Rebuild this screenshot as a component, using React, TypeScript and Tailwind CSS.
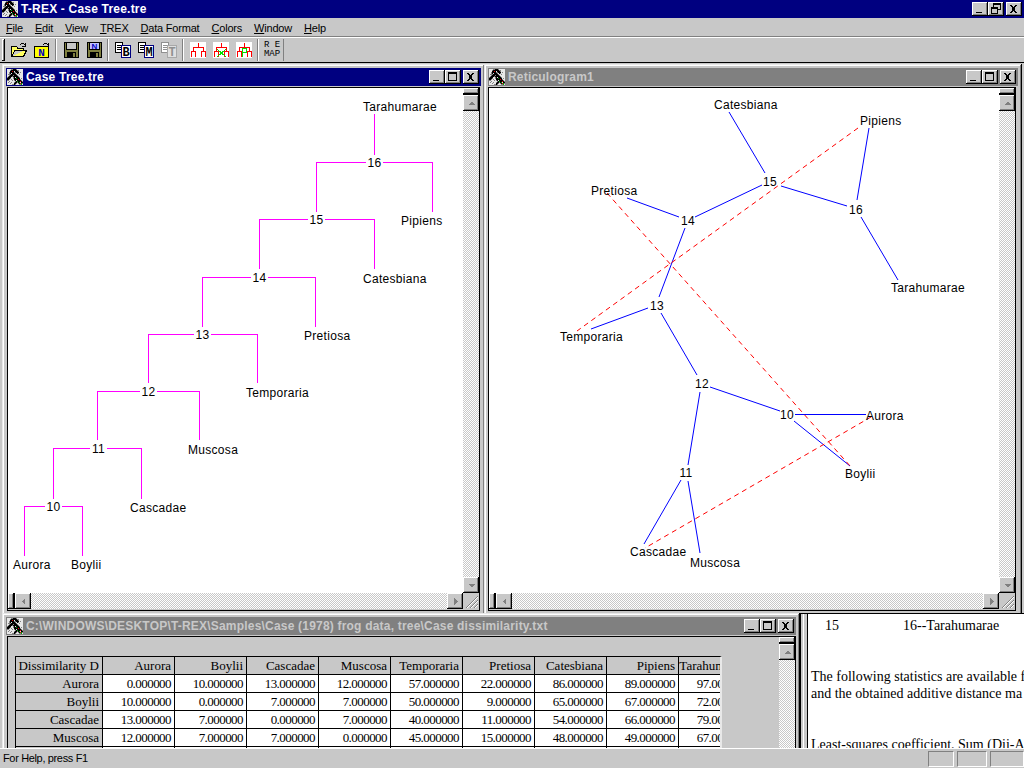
import React from 'react';

const raised = 'shadow-[inset_-1px_-1px_0_#000,inset_1px_1px_0_#fff,inset_-2px_-2px_0_#808080]';
const hatch = 'bg-[repeating-conic-gradient(#c8c8c8_0%_25%,#ffffff_0%_50%)] bg-[length:2px_2px]';

const ICON = [
  'WWWWGGKKKGWWWWWW',
  'WWWGKKKKKKGGWWWW',
  'WWWKKRKWKKKGWWWW',
  'WWGKKKKGGKKKWGWW',
  'WWGKWKKKGWKGWWWW',
  'WGGGKKKKKGWWGWWW',
  'WWGKKKGKKKGWWWWW',
  'WGKKKGKKKKKGWWWW',
  'GKKKWWGKWKKKGWWW',
  'KKKGWWGKKNKKKWGW',
  'KKGWGWWKKKKRKGWW',
  'GGWWWGWGKWKKKKGW',
  'WWGWWWWWGKNKKRKG',
  'WGWWGWWGKKGKNWKK',
  'WWWGWWWKKGWGKRNG',
  'WWWWWGGKGWWWGGNW',
];
const iconColor: Record<string, string> = { W: '#e8e8e8', G: '#808080', K: '#000', R: '#e00000', N: '#00a000' };

const AppIcon = () => (
  <svg width="16" height="16" viewBox="0 0 16 16" shapeRendering="crispEdges" className="shrink-0">
    {ICON.map((row, y) =>
      row.split('').map((c, x) => <rect key={`${x}-${y}`} x={x} y={y} width="1" height="1" fill={iconColor[c]} />)
    )}
  </svg>
);

const Glyph = ({ type }: { type: 'min' | 'max' | 'close' | 'restore' }) => (
  <svg width="16" height="14" viewBox="0 0 16 14" shapeRendering="crispEdges" fill="none" stroke="#000">
    {type === 'min' && <rect x="4" y="9.5" width="6" height="1.5" fill="#000" stroke="none" />}
    {type === 'max' && (
      <>
        <rect x="3.5" y="2.5" width="8" height="8" />
        <path d="M3 3.5h9" />
      </>
    )}
    {type === 'close' && <path d="M4 3l2 0 1.5 2 1.5-2h2l-2.5 4 2.5 4h-2l-1.5-2-1.5 2h-2l2.5-4z" fill="#000" stroke="none" />}
    {type === 'restore' && (
      <>
        <rect x="5.5" y="1.5" width="7" height="6" />
        <path d="M5 2.5h8" />
        <rect x="3.5" y="5.5" width="6" height="6" fill="#c8c8c8" />
        <path d="M3 6.5h7" />
      </>
    )}
  </svg>
);

const CapButton = ({ type }: { type: 'min' | 'max' | 'close' | 'restore' }) => (
  <div className={`w-[16px] h-[14px] bg-[#c8c8c8] ${raised}`}>
    <Glyph type={type} />
  </div>
);

const Arrow = ({ dir }: { dir: 'up' | 'down' | 'left' | 'right' }) => {
  const pts = {
    up: '4,9 11,9 7.5,5.5',
    down: '4,6 11,6 7.5,9.5',
    left: '9,4 9,11 5.5,7.5',
    right: '6,4 6,11 9.5,7.5',
  }[dir];
  return (
    <svg width="15" height="15" viewBox="0 0 15 15" shapeRendering="crispEdges">
      <polygon points={pts} fill="#808080" />
    </svg>
  );
};

const ScrollBtn = ({ dir }: { dir: 'up' | 'down' | 'left' | 'right' }) => (
  <div className={`w-[16px] h-[16px] shrink-0 flex items-center justify-center bg-[#c8c8c8] ${raised}`}>
    <Arrow dir={dir} />
  </div>
);

const VScroll = ({ noDown }: { noDown?: boolean }) => (
  <div className="w-[16px] flex flex-col">
    <div className={`h-[6px] shrink-0 bg-[#c8c8c8] ${raised}`} />
    <div className="h-[1px] shrink-0 bg-black" />
    <ScrollBtn dir="up" />
    <div className={`flex-1 ${hatch}`} />
    {!noDown && <ScrollBtn dir="down" />}
  </div>
);

const HScroll = () => (
  <div className="h-[16px] flex">
    <div className={`w-[6px] shrink-0 bg-[#c8c8c8] ${raised}`} />
    <div className="w-[1px] shrink-0 bg-black" />
    <ScrollBtn dir="left" />
    <div className={`flex-1 ${hatch}`} />
    <ScrollBtn dir="right" />
  </div>
);

const Grip = () => (
  <svg width="16" height="16" viewBox="0 0 16 16" shapeRendering="crispEdges" className="bg-[#c8c8c8]">
    <path d="M15 3L3 15M15 7L7 15M15 11L11 15" stroke="#808080" />
    <path d="M15 4L4 15M15 8L8 15M15 12L12 15" stroke="#fff" />
  </svg>
);

const TitleBar = ({ title, active }: { title: string; active?: boolean }) => (
  <div className={`h-[18px] shrink-0 flex items-center pl-[1px] pr-[2px] ${active ? 'bg-[#000080]' : 'bg-[#808080]'}`}>
    <AppIcon />
    <span className={`ml-[3px] flex-1 truncate font-bold text-[12px] tracking-[0.2px] ${active ? 'text-white' : 'text-[#c8c8c8]'}`}>
      {title}
    </span>
    <CapButton type="min" />
    <CapButton type="max" />
    <div className="w-[2px]" />
    <CapButton type="close" />
  </div>
);

const frame =
  'absolute flex flex-col p-[4px] bg-[#c8c8c8] shadow-[inset_-1px_-1px_0_#000,inset_1px_1px_0_#e8e8e8,inset_-2px_-2px_0_#808080,inset_2px_2px_0_#fff]';

/* ---------- tree ---------- */

type Bracket = { label: string; y: number; l: number; r: number; gl: number; gr: number; end: number };

const BRACKETS: Bracket[] = [
  { label: '16', y: 162, l: 316, r: 432, gl: 366, gr: 383, end: 212 },
  { label: '15', y: 219, l: 259, r: 374, gl: 308, gr: 325, end: 269 },
  { label: '14', y: 277, l: 202, r: 315, gl: 251, gr: 268, end: 327 },
  { label: '13', y: 334, l: 148, r: 257, gl: 194, gr: 211, end: 383 },
  { label: '12', y: 391, l: 97, r: 199, gl: 140, gr: 157, end: 440 },
  { label: '11', y: 448, l: 53, r: 141, gl: 90, gr: 107, end: 499 },
  { label: '10', y: 506, l: 24, r: 82, gl: 45, gr: 62, end: 556 },
];

const TREE_LABELS: [string, number, number][] = [
  ['Tarahumarae', 363, 111],
  ['Pipiens', 401, 225],
  ['Catesbiana', 363, 283],
  ['Pretiosa', 304, 340],
  ['Temporaria', 246, 397],
  ['Muscosa', 188, 454],
  ['Cascadae', 130, 512],
  ['Aurora', 13, 569],
  ['Boylii', 71, 569],
];

const TreeView = () => (
  <svg width="455" height="505" viewBox="8 88 455 505" className="block bg-white text-[12px] tracking-[0.3px]">
    <g stroke="#ff00ff" fill="none" shapeRendering="crispEdges">
      <path d="M374.5 114V155" />
      {BRACKETS.map((b) => (
        <path
          key={b.label}
          d={`M${b.gl} ${b.y + 0.5}H${b.l + 0.5}V${b.end}M${b.gr} ${b.y + 0.5}H${b.r + 0.5}V${b.end}`}
        />
      ))}
    </g>
    {BRACKETS.map((b) => (
      <text key={b.label} x={(b.gl + b.gr) / 2} y={b.y + 5} textAnchor="middle" fill="#000">
        {b.label}
      </text>
    ))}
    {TREE_LABELS.map(([t, x, y]) => (
      <text key={t} x={x} y={y} fill="#000">
        {t}
      </text>
    ))}
  </svg>
);

/* ---------- reticulogram ---------- */

const BLUE: number[][] = [
  [729, 112, 765, 173],
  [869, 128, 857, 200],
  [781, 186, 847, 206],
  [762, 185, 695, 217],
  [627, 198, 679, 217],
  [685, 228, 659, 297],
  [648, 308, 591, 329],
  [861, 217, 898, 280],
  [661, 313, 697, 375],
  [710, 387, 780, 411],
  [795, 414.5, 866, 414.5],
  [794, 421, 850, 466],
  [700, 392, 688, 465],
  [681, 480, 644, 544],
  [688, 481, 700, 553],
];

const RED: number[][] = [
  [858, 128, 577, 331],
  [607, 193, 851, 467],
  [871, 417, 645, 548],
];

const NET_LABELS: [string, number, number, boolean?][] = [
  ['Catesbiana', 714, 109],
  ['Pipiens', 860, 125],
  ['Pretiosa', 591, 195],
  ['Temporaria', 560, 341],
  ['Tarahumarae', 891, 292],
  ['Aurora', 866, 420],
  ['Boylii', 845, 478],
  ['Cascadae', 630, 556],
  ['Muscosa', 690, 567],
  ['15', 770, 186, true],
  ['14', 688, 225, true],
  ['16', 856, 214, true],
  ['13', 657, 310, true],
  ['12', 702, 388, true],
  ['10', 787, 419, true],
  ['11', 686, 477, true],
];

const NetView = () => (
  <svg width="510" height="505" viewBox="489 88 510 505" className="block bg-white text-[12px] tracking-[0.3px]">
    {BLUE.map(([x1, y1, x2, y2]) => (
      <line key={`${x1}-${y1}`} x1={x1} y1={y1} x2={x2} y2={y2} stroke="#0000ff" />
    ))}
    {RED.map(([x1, y1, x2, y2]) => (
      <line key={`${x1}-${y1}`} x1={x1} y1={y1} x2={x2} y2={y2} stroke="#ff0000" strokeDasharray="5 4" />
    ))}
    {NET_LABELS.map(([t, x, y, mid]) => (
      <text key={t} x={x} y={y} textAnchor={mid ? 'middle' : 'start'} fill="#000">
        {t}
      </text>
    ))}
  </svg>
);

/* ---------- table ---------- */

const COLS = ['Aurora', 'Boylii', 'Cascadae', 'Muscosa', 'Temporaria', 'Pretiosa', 'Catesbiana', 'Pipiens', 'Tarahumarae'];
const ROWS: [string, number[]][] = [
  ['Aurora', [0, 10, 13, 12, 57, 22, 86, 89, 97]],
  ['Boylii', [10, 0, 7, 7, 50, 9, 65, 67, 72]],
  ['Cascadae', [13, 7, 0, 7, 40, 11, 54, 66, 79]],
  ['Muscosa', [12, 7, 7, 0, 45, 15, 48, 49, 67]],
];

const th = 'h-[18px] p-0 pr-[3px] leading-[17px] overflow-hidden whitespace-nowrap text-right font-normal bg-[#c8c8c8] border-r border-b border-black';
const td = 'h-[18px] p-0 pr-[3px] leading-[17px] overflow-hidden whitespace-nowrap text-right bg-white border-r border-b border-black text-[13px] tracking-[-0.55px]';

const DataTable = () => (
  <div className="w-[707px] overflow-hidden border-t border-l border-black border-r-2 border-r-[#e8e8e8]">
    <table className="table-fixed border-separate border-spacing-0 w-[735px] font-['Liberation_Serif','Times_New_Roman',serif] text-[13px] text-black">
      <colgroup>
        <col className="w-[87px]" />
        {COLS.map((c) => (
          <col key={c} className="w-[72px]" />
        ))}
      </colgroup>
      <tbody>
        <tr>
          <th className={th}>Dissimilarity D</th>
          {COLS.map((c) => (
            <th key={c} className={th}>
              {c}
            </th>
          ))}
        </tr>
        {ROWS.map(([name, vals]) => (
          <tr key={name}>
            <th className={th}>{name}</th>
            {vals.map((v, i) => (
              <td key={COLS[i]} className={td}>
                {v.toFixed(6)}
              </td>
            ))}
          </tr>
        ))}
        <tr>
          <th className={th}>&nbsp;</th>
          {COLS.map((c) => (
            <td key={c} className={td}>
              &nbsp;
            </td>
          ))}
        </tr>
      </tbody>
    </table>
  </div>
);

/* ---------- toolbar icons ---------- */

const Folder = ({ letter }: { letter?: boolean }) => (
  <svg width="18" height="16" viewBox="0 0 18 16" shapeRendering="crispEdges">
    <path d="M10 3c1-2 4-2 5 0" fill="none" stroke="#000" />
    <path d="M15 1v3h-3" fill="none" stroke="#000" />
    {letter ? (
      <>
        <rect x="1.5" y="4.5" width="14" height="11" fill="#ffff00" stroke="#000" />
        <text x="8.5" y="14" textAnchor="middle" fontSize="11" fontFamily="Liberation Mono, monospace" fontWeight="bold" fill="#0000c0">
          N
        </text>
      </>
    ) : (
      <path d="M1.5 14.5V4.5H6.5L8 6.5H13.5V8.5H5L1.5 14.5H13.5L16.5 8.5H13.5" fill="#ffff60" stroke="#000" />
    )}
  </svg>
);

const Floppy = ({ letter }: { letter?: boolean }) => (
  <svg width="16" height="16" viewBox="0 0 16 16" shapeRendering="crispEdges">
    <rect x="1.5" y="0.5" width="14" height="15" fill="#808040" stroke="#000" />
    <rect x="3.5" y="0.5" width="10" height="7" fill={letter ? '#c0c0ff' : '#c8c8c8'} stroke="#000" />
    <rect x="4" y="10" width="9" height="6" fill="#000" />
    <rect x="10" y="11" width="2" height="4" fill="#808040" />
    {letter && (
      <text x="8.5" y="7" textAnchor="middle" fontSize="8" fontWeight="bold" fill="#0000c0">
        N
      </text>
    )}
  </svg>
);

const DocIcon = ({ letter, dim }: { letter: string; dim?: boolean }) => {
  const ink = dim ? '#909090' : '#000';
  const box = dim ? '#a8a8a8' : '#000080';
  return (
    <svg width="16" height="16" viewBox="0 0 16 16" shapeRendering="crispEdges">
      <rect x="0.5" y="0.5" width="7" height="10" fill="#fff" stroke={ink} />
      <path d="M2 3.5h4M2 5.5h4M2 7.5h4" stroke={ink} />
      <rect x="6.5" y="3.5" width="9" height="12" fill={dim ? '#e0e0e0' : '#fff'} stroke={box} />
      <text x="11" y="13.5" textAnchor="middle" fontSize="12" fontFamily="Liberation Mono, monospace" fontWeight="bold" fill={ink}>
        {letter}
      </text>
    </svg>
  );
};

const TreeIcon = ({ kind }: { kind: 'plain' | 'x' | 'p' }) => (
  <svg width="16" height="16" viewBox="0 0 16 16" shapeRendering="crispEdges" className="bg-white">
    <path d="M8.5 1V5M3.5 9V5.5H13.5V9M1.5 15V9.5H5.5V15M11.5 15V9.5H15.5V15" fill="none" stroke="#ff0000" />
    {kind === 'x' && <path d="M4 7L13 15M13 7L4 15" stroke="#00e000" />}
    {kind === 'p' && <path d="M6.5 15V6.5H10.5V10.5H6.5" fill="none" stroke="#00e000" />}
  </svg>
);

const ToolBtn = ({ children }: { children: React.ReactNode }) => (
  <div className="w-[23px] h-[22px] flex items-center justify-center">{children}</div>
);

const Sep = () => (
  <div className="w-[6px] h-[22px] flex justify-center">
    <div className="w-[2px] h-full bg-[#808080] border-r border-white" />
  </div>
);

const MENU: [string, string][] = [
  ['F', 'ile'],
  ['E', 'dit'],
  ['V', 'iew'],
  ['T', 'REX'],
  ['D', 'ata Format'],
  ['C', 'olors'],
  ['W', 'indow'],
  ['H', 'elp'],
];

export default function App() {
  return (
    <div className="w-[1024px] h-[768px] overflow-hidden flex flex-col bg-[#c8c8c8] text-black font-['Liberation_Sans',Arial,sans-serif] text-[12px]">
      {/* App title */}
      <div className="h-[18px] shrink-0 flex items-center bg-[#000080] pl-[2px] pr-[2px]">
        <AppIcon />
        <span className="ml-[3px] flex-1 font-bold text-white tracking-[0.2px]">T-REX - Case Tree.tre</span>
        <CapButton type="min" />
        <CapButton type="restore" />
        <div className="w-[2px]" />
        <CapButton type="close" />
      </div>

      {/* Menu */}
      <div className="h-[19px] shrink-0 flex items-center gap-[12px] pl-[6px] pt-[2px] text-[11px] tracking-[-0.2px] border-b border-b-[#808080]">
        {MENU.map(([k, rest]) => (
          <span key={k}>
            <u>{k}</u>
            {rest}
          </span>
        ))}
      </div>

      {/* Toolbar */}
      <div className="h-[26px] shrink-0 flex items-center border-t border-t-white border-b border-b-black pl-[2px]">
        <div className={`w-[3px] h-[22px] mr-[2px] ${raised}`} />
        <ToolBtn><Folder /></ToolBtn>
        <ToolBtn><Folder letter /></ToolBtn>
        <Sep />
        <ToolBtn><Floppy /></ToolBtn>
        <ToolBtn><Floppy letter /></ToolBtn>
        <Sep />
        <ToolBtn><DocIcon letter="B" /></ToolBtn>
        <ToolBtn><DocIcon letter="M" /></ToolBtn>
        <ToolBtn><DocIcon letter="T" dim /></ToolBtn>
        <Sep />
        <ToolBtn><TreeIcon kind="plain" /></ToolBtn>
        <ToolBtn><TreeIcon kind="x" /></ToolBtn>
        <ToolBtn><TreeIcon kind="p" /></ToolBtn>
        <Sep />
        <div className="w-[23px] h-[22px] flex flex-col items-center justify-center font-['Liberation_Mono',monospace] text-[9px] leading-[9px] bg-[#c8c8c8] border-r border-[#808080]">
          <span>R E</span>
          <span>MAP</span>
        </div>
      </div>

      {/* MDI area */}
      <div className="relative flex-1 overflow-hidden bg-[#c8c8c8]">
        <div className={`${frame} left-[2px] top-[1px] w-[483px] h-[551px]`}>
          <TitleBar title="Case Tree.tre" active />
          <div className="mt-[1px] ml-[1px] mr-[1px] flex-1 min-h-0 border border-black grid grid-cols-[1fr_16px] grid-rows-[1fr_16px] pb-[1px] bg-[#c8c8c8]">
            <TreeView />
            <VScroll />
            <HScroll />
            <Grip />
          </div>
        </div>

        <div className={`${frame} left-[484px] top-[1px] w-[538px] h-[551px]`}>
          <TitleBar title="Reticulogram1" />
          <div className="mt-[1px] mr-[2px] flex-1 min-h-0 border border-black grid grid-cols-[1fr_16px] grid-rows-[1fr_16px] pb-[1px] bg-[#c8c8c8]">
            <NetView />
            <VScroll />
            <HScroll />
            <Grip />
          </div>
        </div>

        <div className={`${frame} left-[2px] top-[550px] w-[798px] h-[300px]`}>
          <TitleBar title="C:\WINDOWS\DESKTOP\T-REX\Samples\Case (1978) frog data, tree\Case dissimilarity.txt" />
          <div className="mt-[1px] ml-[1px] flex-1 min-h-0 border border-black flex bg-[#c8c8c8]">
            <div className="flex-1 pl-[7px] pt-[19px] overflow-hidden">
              <DataTable />
            </div>
            <VScroll noDown />
          </div>
        </div>

        <div className="absolute left-[800px] top-[550px] w-[224px] h-[200px] flex border-t border-black bg-white">
          <div className="w-[8px] shrink-0 bg-[#c8c8c8] border-l border-black border-r border-r-black shadow-[inset_2px_0_0_#c8c8c8,inset_3px_0_0_#ffffff]" />
          <div className="flex-1 pl-[3px] overflow-hidden whitespace-nowrap font-['Liberation_Serif','Times_New_Roman',serif] text-[14px] leading-[17px] pt-[3px]">
            <div className="flex h-[17px]">
              <span className="ml-[14px] w-[78px]">15</span>
              <span>16--Tarahumarae</span>
            </div>
            <div className="h-[34px]" />
            <div>The following statistics are available f</div>
            <div>and the obtained additive distance ma</div>
            <div className="h-[34px]" />
            <div>Least-squares coefficient. Sum (Dii-A</div>
          </div>
        </div>
      </div>

      {/* Status bar */}
      <div className="h-[20px] shrink-0 flex items-center pl-[3px] border-t border-t-white bg-[#c8c8c8] relative text-[11px] tracking-[-0.35px]">
        <span className="flex-1">For Help, press F1</span>
        <div className="w-[26px] h-[16px] mr-[3px] border border-t-[#808080] border-l-[#808080] border-r-white border-b-white" />
        <div className="w-[30px] h-[16px] mr-[3px] border border-t-[#808080] border-l-[#808080] border-r-white border-b-white" />
        <div className="w-[34px] h-[16px] border border-t-[#808080] border-l-[#808080] border-r-white border-b-white" />
      </div>
    </div>
  );
}
